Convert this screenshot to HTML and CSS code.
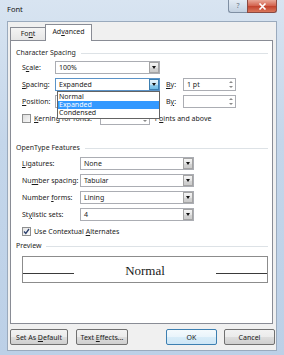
FILE: index.html
```html
<!DOCTYPE html>
<html lang="en">
<head>
    <meta charset="UTF-8">
    <title>Font</title>
    <link rel="stylesheet" href="styles.css">
</head>
<body>
    <div class="window">
        <div class="titlebar">
            <span class="title">Font</span>
            <div class="caption-btns">
                <div class="help">?</div>
                <div class="close">
                    <svg width="9" height="7" viewBox="0 0 9 7"><path d="M1.5 0.5 L7.5 6.5 M7.5 0.5 L1.5 6.5" stroke="#fff" stroke-width="1.6"/></svg>
                </div>
            </div>
        </div>

        <div class="client">
            <div class="tabs">
                <div class="tab">Fo<u>n</u>t</div>
                <div class="tab active">Ad<u>v</u>anced</div>
            </div>

            <div class="panel">
                <div class="group-head">Character Spacing</div>
                <div class="rows rows-spacing">
                    <div class="row">
                        <span class="label">S<u>c</u>ale:</span>
                        <div class="combo"><span>100%</span><i class="drop"></i></div>
                    </div>
                    <div class="row">
                        <span class="label"><u>S</u>pacing:</span>
                        <div class="combo focused">
                            <span>Expanded</span><i class="drop"></i>
                            <!-- lista aberta do combo -->
                            <div class="droplist">
                                <div class="item">Normal</div>
                                <div class="item selected">Expanded</div>
                                <div class="item">Condensed</div>
                            </div>
                        </div>
                        <span class="by"><u>B</u>y:</span>
                        <div class="spin"><span>1 pt</span><i class="arrows"></i></div>
                    </div>
                    <div class="row">
                        <span class="label"><u>P</u>osition:</span>
                        <div class="combo"><span></span><i class="drop"></i></div>
                        <span class="by">B<u>y</u>:</span>
                        <div class="spin"><span></span><i class="arrows"></i></div>
                    </div>
                    <div class="row">
                        <i class="check"></i>
                        <span class="check-label"><u>K</u>erning for fonts:</span>
                        <div class="spin small"><span></span><i class="arrows"></i></div>
                        <span class="after">P<u>o</u>ints and above</span>
                    </div>
                </div>

                <div class="group-head second">OpenType Features</div>
                <div class="rows rows-open">
                    <div class="row">
                        <span class="label"><u>L</u>igatures:</span>
                        <div class="combo"><span>None</span><i class="drop"></i></div>
                    </div>
                    <div class="row">
                        <span class="label">Nu<u>m</u>ber spacing:</span>
                        <div class="combo"><span>Tabular</span><i class="drop"></i></div>
                    </div>
                    <div class="row">
                        <span class="label">Number <u>f</u>orms:</span>
                        <div class="combo"><span>Lining</span><i class="drop"></i></div>
                    </div>
                    <div class="row">
                        <span class="label">St<u>y</u>listic sets:</span>
                        <div class="combo"><span>4</span><i class="drop"></i></div>
                    </div>
                    <div class="row check-row">
                        <i class="check checked">
                            <svg width="7" height="7" viewBox="0 0 7 7"><path d="M1 3.5 L2.8 5.5 L6 1" fill="none" stroke="#2b3f6b" stroke-width="1.3"/></svg>
                        </i>
                        <span class="check-label">Use Contextual <u>A</u>lternates</span>
                    </div>
                </div>

                <div class="group-head third">Preview</div>
                <div class="preview">
                    <span class="pline"></span>
                    <span class="sample">Normal</span>
                    <span class="pline"></span>
                </div>
            </div>

            <div class="buttons">
                <button class="btn wide">Set As <u>D</u>efault</button>
                <button class="btn effects">Text <u>E</u>ffects...</button>
                <button class="btn ok">OK</button>
                <button class="btn cancel">Cancel</button>
            </div>
        </div>
    </div>
</body>
</html>
```

FILE: styles.css
```css
body {
    margin: 0;
    font-family: "Noto Sans", "Open Sans", sans-serif;
    font-size: 7px;
    color: #1b1b1b;
}

.window {
    width: 284px;
    height: 355px;
    box-sizing: border-box;
    padding: 0 7px 4px 7px;
    display: flex;
    flex-direction: column;
    background: linear-gradient(#d8e4f1, #c4d6ea 40%, #bcd0e7);
}

.titlebar {
    height: 21px;
    display: flex;
    align-items: flex-start;
}

.title {
    margin-top: 4px;
    font-size: 7.5px;
    color: #111;
}

.caption-btns {
    margin-left: auto;
    display: flex;
}

.help {
    width: 19px;
    height: 13px;
    box-sizing: border-box;
    border: 1px solid #7f8fa3;
    border-top: none;
    border-right: none;
    border-radius: 0 0 0 3px;
    background: linear-gradient(#e3ebf4, #c3d1e1);
    color: #6a7687;
    font-size: 7px;
    line-height: 11px;
    text-align: center;
}

.close {
    width: 30px;
    height: 13px;
    box-sizing: border-box;
    border: 1px solid #8a4a42;
    border-top: none;
    border-radius: 0 0 3px 0;
    background: linear-gradient(#e9a898, #d2604b 50%, #c2412c 51%, #d9775c);
    display: flex;
    align-items: center;
    justify-content: center;
}

.client {
    flex: 1;
    background: #f0f0f0;
    border: 1px solid #9aaabd;
    padding: 2px 3px 0 2px;
    display: flex;
    flex-direction: column;
}

.tabs {
    height: 16px;
    display: flex;
    align-items: flex-end;
}

.tab {
    height: 13px;
    width: 36px;
    box-sizing: border-box;
    border: 1px solid #898c95;
    border-bottom: none;
    background: linear-gradient(#f4f4f4, #e6e6e6);
    text-align: center;
    line-height: 12px;
}

.tab.active {
    position: relative;
    z-index: 1;
    width: 47px;
    height: 17px;
    margin-left: -1px;
    margin-bottom: -1px;
    background: #fff;
    line-height: 14px;
}

.panel {
    height: 284px;
    box-sizing: border-box;
    border: 1px solid #898c95;
    background: #fff;
    padding: 7px 4px 0 5px;
}

.group-head {
    height: 10px;
    line-height: 10px;
    display: flex;
    align-items: center;
    color: #1e1e1e;
}

.group-head::after {
    content: "";
    flex: 1;
    margin-left: 5px;
    border-top: 1px solid #dde2e6;
}

.group-head.second {
    margin-top: 18px;
}

.group-head.third {
    margin-top: 5px;
}

.rows {
    padding-left: 6px;
    display: flex;
    flex-direction: column;
    gap: 4px;
}

.rows-spacing {
    margin-top: 3px;
}

.rows-open {
    margin-top: 4px;
}

.row {
    height: 13px;
    display: flex;
    align-items: center;
}

.label {
    width: 33px;
    flex-shrink: 0;
}

.rows-open .label {
    width: 58px;
}

.combo {
    position: relative;
    width: 105px;
    height: 13px;
    box-sizing: border-box;
    border: 1px solid #abadb3;
    background: #fff;
    display: flex;
    align-items: center;
    padding-left: 3px;
}

.rows-open .combo {
    width: 114px;
}

.combo span {
    flex: 1;
}

.drop {
    width: 10px;
    height: 11px;
    box-sizing: border-box;
    border: 1px solid #a4a4a4;
    background: linear-gradient(#f5f5f5, #e4e4e4 50%, #d6d6d6 51%, #cbcbcb);
    display: flex;
    align-items: center;
    justify-content: center;
}

.drop::before {
    content: "";
    border-left: 2.5px solid transparent;
    border-right: 2.5px solid transparent;
    border-top: 3px solid #111;
}

.combo.focused {
    border-color: #5a93c8;
}

.combo.focused .drop {
    border-color: #3c7fb1;
    background: linear-gradient(#e5f4fc, #c4e5f6 50%, #98d1ef 51%, #6cbbe6);
}

.droplist {
    position: absolute;
    z-index: 5;
    top: 12px;
    left: 1px;
    width: 103px;
    box-sizing: border-box;
    border: 1px solid #646464;
    background: #fff;
    padding: 1px 0;
}

.item {
    height: 8px;
    line-height: 8px;
    padding-left: 1px;
}

.item.selected {
    background: #3399ff;
    color: #fff;
}

.by {
    width: 17px;
    margin-left: 6px;
}

.spin {
    width: 53px;
    height: 13px;
    box-sizing: border-box;
    border: 1px solid #abadb3;
    background: #fff;
    display: flex;
    align-items: center;
    padding-left: 3px;
}

.spin.small {
    width: 50px;
    margin-left: 8px;
}

.spin span {
    flex: 1;
}

.arrows {
    width: 8px;
    height: 11px;
    display: flex;
    flex-direction: column;
    align-items: center;
    justify-content: space-around;
    padding: 1px 0;
    box-sizing: border-box;
}

.arrows::before {
    content: "";
    border-left: 2px solid transparent;
    border-right: 2px solid transparent;
    border-bottom: 2px solid #8a8a8a;
}

.arrows::after {
    content: "";
    border-left: 2px solid transparent;
    border-right: 2px solid transparent;
    border-top: 2px solid #8a8a8a;
}

.check {
    width: 9px;
    height: 9px;
    box-sizing: border-box;
    border: 1px solid #8e8f8f;
    background: linear-gradient(135deg, #dcdcdc, #f8f8f8);
    display: flex;
    align-items: center;
    justify-content: center;
}

.check.checked {
    background: linear-gradient(135deg, #e4e4e4, #fdfdfd);
}

.check-label {
    margin-left: 3px;
}

.after {
    margin-left: 5px;
}

.check-row {
    height: 10px;
    margin-top: 1px;
}

.preview {
    margin: 5px 0 0 6px;
    height: 27px;
    box-sizing: border-box;
    border: 1px solid #8c8c8c;
    display: flex;
    align-items: flex-start;
}

.pline {
    width: 51px;
    margin-top: 16px;
    border-top: 1px solid #3a3a3a;
}

.sample {
    flex: 1;
    text-align: center;
    margin-top: 7px;
    line-height: 14px;
    font-family: "Liberation Serif", serif;
    font-size: 13px;
    color: #1a1a1a;
}

.buttons {
    margin-top: 5px;
    margin-right: -2px;
    display: flex;
}

.btn {
    height: 16px;
    padding: 0;
    box-sizing: border-box;
    border: 1px solid #707070;
    border-radius: 2px;
    background: linear-gradient(#f2f2f2, #ebebeb 50%, #dddddd 51%, #cfcfcf);
    font-family: "Noto Sans", "Open Sans", sans-serif;
    font-size: 7px;
    color: #1b1b1b;
}

.btn.wide {
    width: 58px;
}

.btn.effects {
    width: 52px;
    margin-left: 8px;
}

.btn.ok {
    width: 51px;
    margin-left: auto;
    border-color: #3c7fb1;
    background: linear-gradient(#f4fafd, #e9f4fb 50%, #d8ecf8 51%, #cde6f6);
}

.btn.cancel {
    width: 51px;
    margin-left: 7px;
}
```
